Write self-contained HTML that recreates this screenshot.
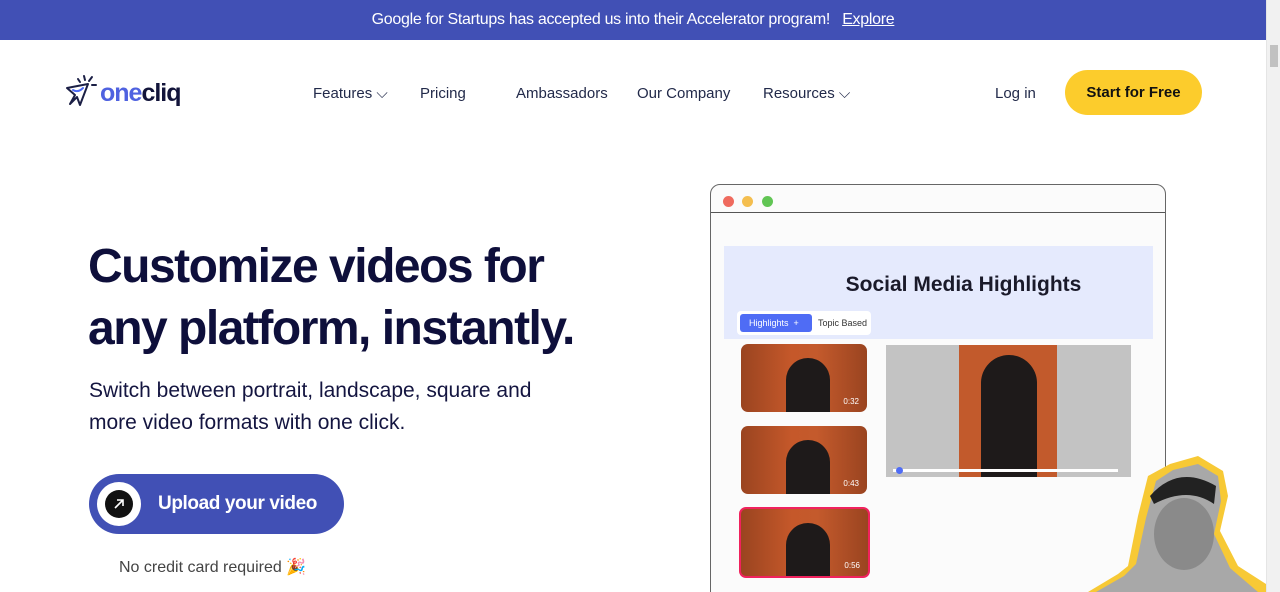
<!DOCTYPE html>
<html style="width:1280px;height:592px;overflow:hidden"><head><meta charset="utf-8"><style>
*{margin:0;padding:0;box-sizing:border-box}
body{width:1280px;height:592px;overflow:hidden;font-family:"Liberation Sans",sans-serif;background:#fff;position:relative;color:#0f1035}
.ban{position:absolute;left:0;top:0;width:1266px;height:40px;background:#4150b5;color:#fff;font-size:16px;text-align:center;line-height:40px;letter-spacing:-0.3px}
.ban u{margin-left:8px}
.sb{position:absolute;right:0;top:0;width:14px;height:592px;background:#f1f1f1;border-left:1px solid #e5e5e5;z-index:5}
.sb i{position:absolute;left:3px;top:45px;width:8px;height:22px;background:#c1c1c1}
.a{position:absolute;font-size:15px;color:#222a4a}
.btn{position:absolute;left:1065px;top:70px;width:137px;height:45px;border-radius:23px;background:#fccc2c;font-size:15px;font-weight:bold;text-align:center;line-height:45px;color:#111}
h1{position:absolute;left:88px;top:236px;font-size:48px;line-height:62px;font-weight:bold;letter-spacing:-1.5px;color:#0e0f3b}
.sub{position:absolute;left:89px;top:375px;font-size:21px;line-height:32px;color:#141540}
.up{position:absolute;left:89px;top:474px;width:255px;height:60px;border-radius:30px;background:#4150b5;color:#fff;font-size:19px;font-weight:bold;line-height:60px;padding-left:69px;letter-spacing:-0.4px}
.up b{position:absolute;left:8px;top:8px;width:44px;height:44px;border-radius:50%;background:#fff}
.up b i{position:absolute;left:8px;top:8px;width:28px;height:28px;border-radius:50%;background:#111;display:block}
.up svg{display:block}
.nc{position:absolute;left:119px;top:557px;font-size:16px;color:#444}
.clip{position:absolute;left:0;top:0;width:1280px;height:592px;overflow:hidden}
.win{position:absolute;left:710px;top:184px;width:456px;height:440px;border:1px solid #666;border-radius:10px;background:#fbfbfb}
.dot{position:absolute;top:11px;width:11px;height:11px;border-radius:50%}
.bar{position:absolute;left:0;top:27px;width:454px;height:1px;background:#555}
.hd{position:absolute;left:13px;top:61px;width:429px;height:93px;background:#e5eafd}
.hd h2{position:absolute;left:0;width:100%;top:27px;text-align:center;padding-left:50px;font-size:21px;color:#1a1a2a;font-weight:bold}
.tabs{position:absolute;left:26px;top:126px;width:134px;height:24px;background:#fff;border-radius:4px}
.tabs i{position:absolute;left:3px;top:3px;width:72px;height:18px;background:#4f6cf5;border-radius:3px;color:#fff;font-size:9px;font-style:normal;line-height:18px;padding-left:9px}
.tabs s{position:absolute;left:81px;top:7px;font-size:9px;text-decoration:none;color:#333}
.th{position:absolute;left:30px;width:126px;height:68px;border-radius:7px;background:linear-gradient(90deg,#9a4420,#c5582a 40%,#c45a2c 60%,#9a4420);overflow:hidden}
.th:after{content:"";position:absolute;left:45px;top:14px;width:44px;height:60px;border-radius:22px 22px 0 0;background:#1e1a1a}
.th span{position:absolute;right:8px;bottom:6px;color:#fff;font-size:8px;z-index:2}
.pl{position:absolute;left:175px;top:160px;width:245px;height:132px;background:#c3c3c3}
.pl .v{position:absolute;left:73px;top:0;width:98px;height:132px;background:#c25a2c}
.pl .v:after{content:"";position:absolute;left:22px;top:10px;width:56px;height:122px;border-radius:28px 28px 0 0;background:#1e1a1a}
.pl .t{position:absolute;left:7px;top:124px;width:225px;height:3px;background:#fff;z-index:2}
.pl .k{position:absolute;left:10px;top:122px;width:7px;height:7px;border-radius:50%;background:#4f6cf5;z-index:3}
</style></head><body>
<div class="clip">
<div class="ban">Google for Startups has accepted us into their Accelerator program! <u>Explore</u></div>
<div class="sb"><i></i></div>
<svg style="position:absolute;left:64px;top:74px" width="36" height="34" viewBox="0 0 36 34" fill="none" stroke="#1b1f45" stroke-width="2" stroke-linejoin="round" stroke-linecap="round"><path d="M3 14 L24 10 L16 31 L13 23 L6 30 L11 21 Z"/><path d="M20 2 L21 6 M28 3 L25 7 M32 11 L28 11 M14 5 L16 8"/><path d="M9 16 Q14 19 19 14" stroke="#4f6cf5"/></svg>
<div style="position:absolute;left:100px;top:79px;font-size:25px;font-weight:bold;letter-spacing:-1px"><span style="color:#4f62e0">one</span><span style="color:#12143a">cliq</span></div>
<div class="a" style="left:313px;top:85px">Features ⌵</div>
<div class="a" style="left:420px;top:85px">Pricing</div>
<div class="a" style="left:516px;top:85px">Ambassadors</div>
<div class="a" style="left:637px;top:85px">Our Company</div>
<div class="a" style="left:763px;top:85px">Resources ⌵</div>
<div class="a" style="left:995px;top:85px">Log in</div>
<div class="btn">Start for Free</div>
<h1>Customize videos for<br>any platform, instantly.</h1>
<div class="sub">Switch between portrait, landscape, square and<br>more video formats with one click.</div>
<div class="up"><b><i><svg width="28" height="28" viewBox="0 0 28 28" stroke="#fff" stroke-width="1.6" fill="none"><path d="M10 18 L18 10 M12 10 H18 V16"/></svg></i></b>Upload your video</div>
<div class="nc">No credit card required 🎉</div>
<div class="win">
<div class="dot" style="left:12px;background:#ef6a5e"></div><div class="dot" style="left:31px;background:#f4be4f"></div><div class="dot" style="left:51px;background:#61c554"></div>
<div class="bar"></div>
<div class="hd"><h2>Social Media Highlights</h2></div>
<div class="tabs"><i>Highlights &nbsp;+</i><s>Topic Based</s></div>
<div class="th" style="top:159px"><span>0:32</span></div>
<div class="th" style="top:241px"><span>0:43</span></div>
<div class="th" style="top:322px;border:2px solid #f0225d;left:28px;width:131px;height:71px"><span>0:56</span></div>
<div class="pl"><div class="v"></div><div class="t"></div><div class="k"></div></div>
</div>
<svg style="position:absolute;left:1088px;top:456px" width="178" height="136" viewBox="0 0 178 136"><path d="M0 136 L30 118 L40 110 L50 60 L60 20 L82 8 L110 0 L135 15 L140 40 L132 75 L150 110 L178 128 L178 136 Z" fill="#f7c935"/><path d="M8 136 L36 120 L48 108 L58 62 L68 25 L85 14 L110 8 L130 20 L133 45 L126 78 L142 112 L170 136 Z" fill="#a8a8a8"/><path d="M62 40 Q90 8 128 30 L126 48 Q100 30 66 48 Z" fill="#222"/><ellipse cx="96" cy="78" rx="30" ry="36" fill="#8a8a8a"/></svg>
</div>
</body></html>
